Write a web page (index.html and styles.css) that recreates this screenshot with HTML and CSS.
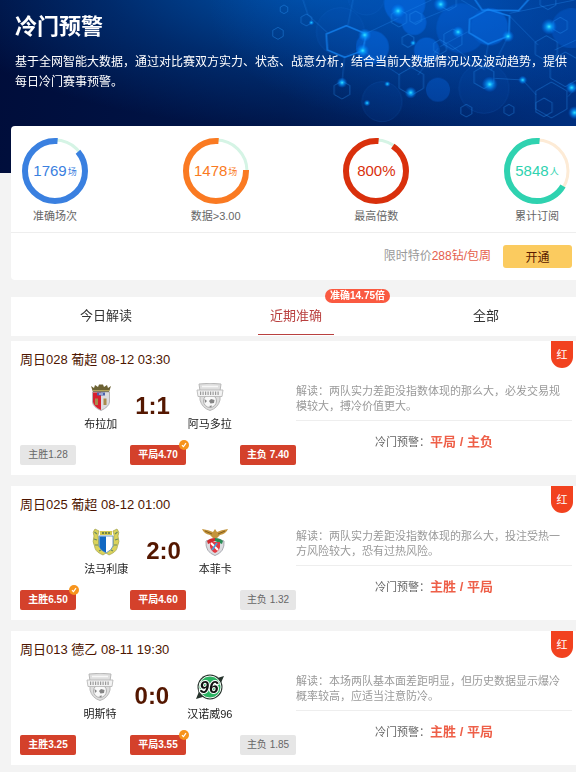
FILE: index.html
```
<!DOCTYPE html>
<html lang="zh-CN">
<head>
    <meta charset="UTF-8">
    <meta name="viewport" content="width=device-width, initial-scale=1.0">
    <title>冷门预警</title>
    <link rel="stylesheet" href="styles.css">
</head>
<body>
    <!-- Shared shapes -->
    <svg class="defs" aria-hidden="true">
        <defs>
            <radialGradient id="glow">
                <stop offset="0" stop-color="#3ff0ff"/>
                <stop offset="0.3" stop-color="#0aa8ff" stop-opacity="0.85"/>
                <stop offset="1" stop-color="#0070ff" stop-opacity="0"/>
            </radialGradient>
            <polygon id="hex" points="0,-1 0.87,-0.5 0.87,0.5 0,1 -0.87,0.5 -0.87,-0.5" vector-effect="non-scaling-stroke"/>
        </defs>
        <symbol id="tick" viewBox="0 0 10 10">
            <circle cx="5" cy="5" r="5" fill="#f7941d"/>
            <path d="M3 5.2 4.5 6.6 7 3.2" fill="none" stroke="#fff" stroke-width="1.2"/>
        </symbol>
        <symbol id="crest-braga" viewBox="0 0 28 28">
            <path d="M4 3 7 5 8 2 11 4 12 1.500 16 1.500 17 4 20 2 21 5 24 3 22 9H6Z" fill="#6c6233"/>
            <path d="M6 7.500H22" stroke="#b7a65a" stroke-width="1"/>
            <path d="M5.500 9H22.500V19Q22 24 14 27.500 6 24 5.500 19Z" fill="#dcdce0" stroke="#a5a2a6" stroke-width="0.800"/>
            <path d="M6 9.500H14V27Q6.500 23.500 6 19Z" fill="#d8202e"/>
            <path d="M10 9.500H18V12.500H10Z" fill="#4c62ad"/>
            <path d="M12 11H16" stroke="#e8e8f4" stroke-width="1"/>
            <path d="M8 15.500H11V22H8ZM16.500 15.500H19.500V22H16.500Z" fill="#a98a4c"/>
        </symbol>
        <symbol id="crest-grey" viewBox="0 0 28 28">
            <path d="M3 1Q14 -0.500 25 1L24 8V17Q22 25 14 27.500 6 25 4 17V8Z" fill="#dedede" stroke="#b8b8b8" stroke-width="1"/>
            <path d="M6 3.500H22" stroke="#f7f7f7" stroke-width="1.500"/>
            <circle cx="14" cy="18" r="6.500" fill="#f8f8f8" stroke="#b0b0b0" stroke-width="1"/>
            <path d="M15 16 18.500 17 18 20 14.500 20.500 13 18ZM8.500 16 11 18 9 20ZM13 23 16 22.500 15 24.500Z" fill="#858585"/>
            <path d="M1 7H27L26 13.500H2Z" fill="#f3f3f3" stroke="#b2b2b2" stroke-width="0.800"/>
            <path d="M4 10.200H24" stroke="#9a9a9a" stroke-width="3.500" stroke-dasharray="1.200 1.300"/>
        </symbol>
        <symbol id="crest-famalicao" viewBox="0 0 28 28">
            <path d="M3 1 7 3 6 7 7 19 14 24 21 19 22 7 21 3 25 1Q28 4 26 8 28 14 25.500 18 25 23 20 25.500L17 27 14 25 11 27 8 25.500Q3 23 2.500 18 0 14 2 8 0 4 3 1Z" fill="#dbd35a" stroke="#a2a250" stroke-width="0.700"/>
            <path d="M8 3H20V7H8Z" fill="#d3c94e"/>
            <path d="M10 5H18" stroke="#4f6f4c" stroke-width="1.500" stroke-dasharray="2 1"/>
            <path d="M2.500 4 5 6M2 11 5 12M3 17 6 17M25.500 4 23 6M26 11 23 12M25 17 22 17M7 23 9 22M21 23 19 22" stroke="#6b8a62" stroke-width="1.200"/>
            <path d="M7 8H21V18Q20 22 14 25 8 22 7 18Z" fill="#fff" stroke="#4e86b3" stroke-width="0.800"/>
            <path d="M7.500 8.500H14V24.500Q8 22 7.500 18Z" fill="#1168c2"/>
        </symbol>
        <symbol id="crest-benfica" viewBox="0 0 28 28">
            <path d="M5 13Q4 24 14 27.500 24 24 23 13Q14 9 5 13Z" fill="#dcdce0" stroke="#a9a9b0" stroke-width="1"/>
            <path d="M6 13Q9 10 14 10V13L7 16Z" fill="#d02b31"/>
            <path d="M22 13Q19 10 14 10V13L21 16Z" fill="#2a8b56"/>
            <path d="M9 14H19V19Q18 23 14 25 10 23 9 19Z" fill="#e23b42"/>
            <path d="M10 15 17 22" stroke="#fff" stroke-width="2"/>
            <path d="M16 15 11 22" stroke="#4d9ad6" stroke-width="1.800"/>
            <path d="M1 1Q8 2 12 4L14 1 16 4Q20 2 27 1 25 6 19 7L16 10H12L9 7Q3 6 1 1Z" fill="#c4943c"/>
            <path d="M4 3 11 6M24 3 17 6" stroke="#7c5818" stroke-width="0.900"/>
        </symbol>
    </svg>

    <!-- Banner -->
    <header class="banner">
        <svg class="banner-art" viewBox="0 0 864 519" aria-hidden="true">
            <g fill="#0878ff" opacity="0.4">
                <circle cx="350" cy="10" r="62"/>
                <circle cx="378" cy="68" r="37"/>
                <circle cx="253" cy="142" r="50"/>
                <circle cx="416" cy="150" r="38"/>
                <circle cx="520" cy="85" r="75" opacity="0.6"/>
                <circle cx="604" cy="80" r="56"/>
                <circle cx="450" cy="269" r="36" opacity="0.7"/>
                <circle cx="850" cy="85" r="60" opacity="0.6"/>
            </g>
            <g fill="#0b5ac8" fill-opacity="0.12" stroke="#2479d8" stroke-opacity="0.25" stroke-width="2">
                <circle cx="157" cy="95" r="72"/>
                <circle cx="235" cy="-10" r="55"/>
                <circle cx="282" cy="305" r="60"/>
                <circle cx="588" cy="265" r="75"/>
            </g>
            <path d="M45 0 60 45 118 98M235 100 330 55M345 40 430 0M380 68 495 20M170 168 162 248M225 152 335 225M390 225 450 145M456 140 540 95M480 130 590 210M665 40 860 0M662 45 750 135M800 150 864 120M660 110 610 210M745 285 704 240 620 235M840 290 864 262M600 135 588 205M520 0 570 30M195 0 180 75" fill="none" stroke="#268cf0" stroke-opacity="0.35" stroke-width="3"/>
            <g class="hex-thick">
                <polygon points="115,102 175,77 235,102 224,152 170,172 118,150"/>
                <polygon points="545,58 600,28 665,48 662,108 600,132 543,98"/>
                <polyline points="558,-5 582,30 692,32 725,-5"/>
            </g>
            <g class="hex-thin">
                <use href="#hex" transform="translate(333 55) scale(26)"/>
                <use href="#hex" transform="translate(383 53) scale(20)"/>
                <use href="#hex" transform="translate(495 118) scale(31)"/>
                <use href="#hex" transform="translate(456 141) scale(22)"/>
                <use href="#hex" transform="translate(360 122) scale(20)"/>
                <use href="#hex" transform="translate(482 6) scale(26)"/>
                <use href="#hex" transform="translate(55 60) scale(18)"/>
                <use href="#hex" transform="translate(370 244) scale(42)"/>
                <use href="#hex" transform="translate(588 232) scale(34)"/>
                <use href="#hex" transform="translate(162 270) scale(27)"/>
                <use href="#hex" transform="translate(775 145) scale(38)"/>
                <use href="#hex" transform="translate(780 2) scale(27)"/>
                <use href="#hex" transform="translate(817 76) scale(24)"/>
                <use href="#hex" transform="translate(832 208) scale(52)"/>
                <use href="#hex" transform="translate(790 300) scale(54)"/>
                <use href="#hex" transform="translate(768 322) scale(28)"/>
                <use href="#hex" transform="translate(535 332) scale(19)"/>
                <use href="#hex" transform="translate(663 330) scale(17)"/>
                <use href="#hex" transform="translate(-30 100) scale(18)"/>
                <use href="#hex" transform="translate(-12 28) scale(13)"/>
            </g>
            <g fill="url(#glow)">
                <circle cx="330" cy="33" r="22"/>
                <circle cx="458" cy="13" r="22"/>
                <circle cx="230" cy="105" r="20"/>
                <circle cx="224" cy="152" r="20"/>
                <circle cx="510" cy="96" r="18"/>
                <circle cx="660" cy="109" r="18"/>
                <circle cx="783" cy="80" r="24"/>
                <circle cx="162" cy="248" r="16"/>
                <circle cx="368" cy="278" r="18"/>
                <circle cx="605" cy="253" r="24"/>
                <circle cx="704" cy="240" r="13"/>
                <circle cx="851" cy="263" r="18"/>
                <circle cx="298" cy="252" r="9"/>
                <circle cx="237" cy="309" r="10"/>
                <circle cx="375" cy="129" r="9"/>
                <circle cx="70" cy="68" r="8"/>
                <circle cx="860" cy="338" r="20"/>
            </g>
        </svg>
        <h1>冷门预警</h1>
        <p>基于全网智能大数据，通过对比赛双方实力、状态、战意分析，结合当前大数据情况以及波动趋势，提供<br>每日冷门赛事预警。</p>
    </header>

    <main class="container">
        <!-- Statistics -->
        <section class="stats">
            <ul class="rings">
                <li>
                    <div class="ring blue">
                        <svg viewBox="0 0 66 66" aria-hidden="true">
                            <circle class="track" cx="33" cy="33" r="31"/>
                            <circle class="bar" cx="33" cy="33" r="30" pathLength="360" stroke-dasharray="315 45" stroke-dashoffset="-50"/>
                        </svg>
                        <strong>1769<small>场</small></strong>
                    </div>
                    <span>准确场次</span>
                </li>
                <li>
                    <div class="ring orange">
                        <svg viewBox="0 0 66 66" aria-hidden="true">
                            <circle class="track" cx="33" cy="33" r="31"/>
                            <circle class="bar" cx="33" cy="33" r="30" pathLength="360" stroke-dasharray="277 83" stroke-dashoffset="-88"/>
                        </svg>
                        <strong>1478<small>场</small></strong>
                    </div>
                    <span>数据&gt;3.00</span>
                </li>
                <li>
                    <div class="ring red">
                        <svg viewBox="0 0 66 66" aria-hidden="true">
                            <circle class="track" cx="33" cy="33" r="31"/>
                            <circle class="bar" cx="33" cy="33" r="30" pathLength="360" stroke-dasharray="331 29" stroke-dashoffset="-34"/>
                        </svg>
                        <strong>800%</strong>
                    </div>
                    <span>最高倍数</span>
                </li>
                <li>
                    <div class="ring green">
                        <svg viewBox="0 0 66 66" aria-hidden="true">
                            <circle class="track" cx="33" cy="33" r="31"/>
                            <circle class="bar" cx="33" cy="33" r="30" pathLength="360" stroke-dasharray="245 115" stroke-dashoffset="-120"/>
                        </svg>
                        <strong>5848<small>人</small></strong>
                    </div>
                    <span>累计订阅</span>
                </li>
            </ul>
            <div class="offer">
                <p>限时特价<em>288钻/包周</em></p>
                <button type="button" class="btn">开通</button>
            </div>
        </section>

        <!-- Tabs -->
        <nav class="tabs">
            <a href="#today">今日解读</a>
            <a href="#recent" class="active">近期准确<span class="tip">准确14.75倍</span></a>
            <a href="#all">全部</a>
        </nav>

        <!-- Matches -->
        <article class="match">
            <span class="flag">红</span>
            <h2>周日028 葡超 08-12 03:30</h2>
            <div class="match-body">
                <div class="game">
                    <div class="teams">
                        <div class="team"><svg aria-hidden="true"><use href="#crest-braga"/></svg>布拉加</div>
                        <b class="score">1:1</b>
                        <div class="team"><svg aria-hidden="true"><use href="#crest-grey"/></svg>阿马多拉</div>
                    </div>
                    <div class="odds">
                        <span>主胜1.28</span>
                        <span class="hot">平局4.70<svg aria-hidden="true"><use href="#tick"/></svg></span>
                        <span class="hot">主负 7.40</span>
                    </div>
                </div>
                <div class="analysis">
                    <p>解读：两队实力差距没指数体现的那么大，必发交易规模较大，搏冷价值更大。</p>
                    <div class="warning">冷门预警：<b>平局 / 主负</b></div>
                </div>
            </div>
        </article>

        <article class="match">
            <span class="flag">红</span>
            <h2>周日025 葡超 08-12 01:00</h2>
            <div class="match-body">
                <div class="game">
                    <div class="teams">
                        <div class="team"><svg aria-hidden="true"><use href="#crest-famalicao"/></svg>法马利康</div>
                        <b class="score">2:0</b>
                        <div class="team"><svg aria-hidden="true"><use href="#crest-benfica"/></svg>本菲卡</div>
                    </div>
                    <div class="odds">
                        <span class="hot">主胜6.50<svg aria-hidden="true"><use href="#tick"/></svg></span>
                        <span class="hot">平局4.60</span>
                        <span>主负 1.32</span>
                    </div>
                </div>
                <div class="analysis">
                    <p>解读：两队实力差距没指数体现的那么大，投注受热一方风险较大，恐有过热风险。</p>
                    <div class="warning">冷门预警：<b>主胜 / 平局</b></div>
                </div>
            </div>
        </article>

        <article class="match">
            <span class="flag">红</span>
            <h2>周日013 德乙 08-11 19:30</h2>
            <div class="match-body">
                <div class="game">
                    <div class="teams">
                        <div class="team"><svg aria-hidden="true"><use href="#crest-grey"/></svg>明斯特</div>
                        <b class="score">0:0</b>
                        <div class="team">
                            <svg viewBox="0 0 28 28" aria-hidden="true">
                                <circle cx="14" cy="14" r="12.500" fill="#26332c"/>
                                <path d="M28 3 18 6 24 12ZM0 26 10 23 4 16Z" fill="#26332c"/>
                                <circle cx="14" cy="14" r="11" fill="#2cb463" stroke="#f3f7f3" stroke-width="1"/>
                                <text class="crest-text" x="13" y="20" text-anchor="middle">96</text>
                            </svg>
                            汉诺威96
                        </div>
                    </div>
                    <div class="odds">
                        <span class="hot">主胜3.25</span>
                        <span class="hot">平局3.55<svg aria-hidden="true"><use href="#tick"/></svg></span>
                        <span>主负 1.85</span>
                    </div>
                </div>
                <div class="analysis">
                    <p>解读：本场两队基本面差距明显，但历史数据显示爆冷概率较高，应适当注意防冷。</p>
                    <div class="warning">冷门预警：<b>主胜 / 平局</b></div>
                </div>
            </div>
        </article>
    </main>
</body>
</html>
```

FILE: styles.css
```
/* Basic Styles */
* {
    box-sizing: border-box;
    margin: 0;
    padding: 0;
}

body {
    font-family: "Liberation Sans", "Noto Sans CJK SC", sans-serif;
    font-size: 11px;
    line-height: 15px;
    color: #333;
    background: #f3f3f3;
    overflow-x: hidden;
}

ul {
    list-style: none;
}

a {
    color: inherit;
    text-decoration: none;
}

.defs {
    display: block;
    width: 0;
    height: 0;
}

/* Banner */
.banner {
    position: relative;
    height: 173px;
    padding: 11px 0 0 15px;
    color: #fff;
    white-space: nowrap;
    overflow: hidden;
    background:
        radial-gradient(ellipse 240px 120px at 78% 5%, rgba(0, 100, 230, 0.4), transparent),
        radial-gradient(ellipse 400px 150px at 55% -12%, rgba(0, 95, 190, 0.85), rgba(0, 80, 170, 0.4) 55%, transparent),
        linear-gradient(100deg, #000d3a, #00164a 50%, #003080);
}

.banner-art {
    position: absolute;
    top: 0;
    right: 0;
    width: 288px;
    height: 173px;
    overflow: visible;
}

.hex-thick {
    fill: none;
    stroke: #1587f5;
    stroke-opacity: 0.75;
    stroke-width: 5px;
}

.hex-thin {
    fill: none;
    stroke: #2a93f5;
    stroke-opacity: 0.4;
    stroke-width: 1px;
}

.banner h1 {
    position: relative;
    font-size: 22px;
    line-height: 32px;
}

.banner p {
    position: relative;
    margin-top: 9px;
    font-size: 12px;
    line-height: 20px;
}

.container {
    position: relative;
    margin: -47px -5px 0 11px;
}

/* Statistics */
.stats {
    background: #fff;
    border-radius: 4px;
}

.rings {
    display: flex;
    justify-content: space-between;
    padding: 12px 11px 8px;
    border-bottom: 1px solid #eee;
}

.rings li {
    display: flex;
    flex-direction: column;
    align-items: center;
    gap: 5px;
    color: #666;
}

.ring {
    display: grid;
    place-items: center;
    width: 66px;
    height: 66px;
}

.ring > * {
    grid-area: 1 / 1;
}

.ring circle {
    fill: none;
}

.track {
    stroke: #d5f4e5;
    stroke-width: 3px;
}

.bar {
    stroke: currentColor;
    stroke-width: 6px;
    transform: rotate(-90deg);
    transform-origin: center;
}

.ring strong {
    font-size: 15px;
    font-weight: normal;
    line-height: 18px;
}

.ring small {
    margin-left: 1px;
    font-size: 9px;
    vertical-align: 1px;
}

.blue {
    color: #3a80e0;
}

.orange {
    color: #fa7a22;
}

.red {
    color: #d9300c;
}

.green {
    color: #2fd2b0;
}

.green .track {
    stroke: #fdebd6;
}

.offer {
    display: flex;
    align-items: center;
    justify-content: flex-end;
    gap: 12px;
    padding: 12px 9px;
    font-size: 12px;
    color: #999;
}

.offer em {
    font-style: normal;
    color: #e5604c;
}

.btn {
    width: 69px;
    height: 23px;
    border: 0;
    border-radius: 3px;
    background: #fbcb5f;
    color: #5a1a00;
    font-family: inherit;
    font-size: 12px;
    cursor: pointer;
}

/* Tabs */
.tabs {
    display: grid;
    grid-template-columns: repeat(3, 1fr);
    justify-items: center;
    height: 39px;
    margin: 17px 0 5px;
    background: #fff;
    font-size: 13px;
    line-height: 38px;
}

.tabs a {
    position: relative;
    padding: 0 12px;
}

.tabs .active {
    height: 38px;
    color: #b9403f;
    border-bottom: 1px solid #b9403f;
}

.tip {
    position: absolute;
    top: -8px;
    left: 67px;
    padding: 0 5px;
    border-radius: 7px;
    background: #fa5a41;
    color: #fff;
    font-size: 10px;
    font-weight: bold;
    line-height: 14px;
    white-space: nowrap;
}

/* Matches */
.match {
    position: relative;
    margin-bottom: 11px;
    padding: 9px 9px 10px;
    background: #fff;
}

.match h2 {
    font-size: 13px;
    font-weight: normal;
    line-height: 20px;
    color: #4d1500;
}

.flag {
    position: absolute;
    top: 0;
    right: 8px;
    width: 22px;
    height: 27px;
    border-radius: 0 0 11px 11px;
    background: #f2421f;
    color: #fff;
    line-height: 29px;
    text-align: center;
}

.match-body {
    display: grid;
    grid-template-columns: 1fr 1fr;
}

.teams {
    display: flex;
    align-items: center;
    justify-content: center;
    gap: 18px;
    padding-top: 13px;
}

.team {
    display: flex;
    flex-direction: column;
    align-items: center;
    gap: 6px;
    color: #222;
}

.team svg {
    width: 28px;
    height: 28px;
}

.crest-text {
    font-size: 17px;
    font-weight: bold;
    font-style: italic;
    fill: #101211;
    stroke: #fff;
    stroke-width: 2px;
    paint-order: stroke;
}

.score {
    padding-bottom: 4px;
    font-size: 24px;
    line-height: 28px;
    color: #541700;
}

.odds {
    display: flex;
    justify-content: space-between;
    margin-top: 13px;
}

.odds span {
    position: relative;
    width: 56px;
    border-radius: 2px;
    background: #e6e6e6;
    color: #666;
    font-size: 10px;
    line-height: 20px;
    text-align: center;
}

.odds .hot {
    background: #d4412b;
    color: #fff;
    font-weight: bold;
}

.odds svg {
    position: absolute;
    top: -5px;
    right: -3px;
    width: 10px;
    height: 10px;
}

.analysis p {
    height: 51px;
    padding: 14px 6px 0 0;
    border-bottom: 1px solid #eee;
    color: #999;
}

.warning {
    padding-top: 11px;
    line-height: 20px;
    text-align: center;
    color: #666;
}

.warning b {
    font-size: 13px;
    color: #ee5f48;
}
```
